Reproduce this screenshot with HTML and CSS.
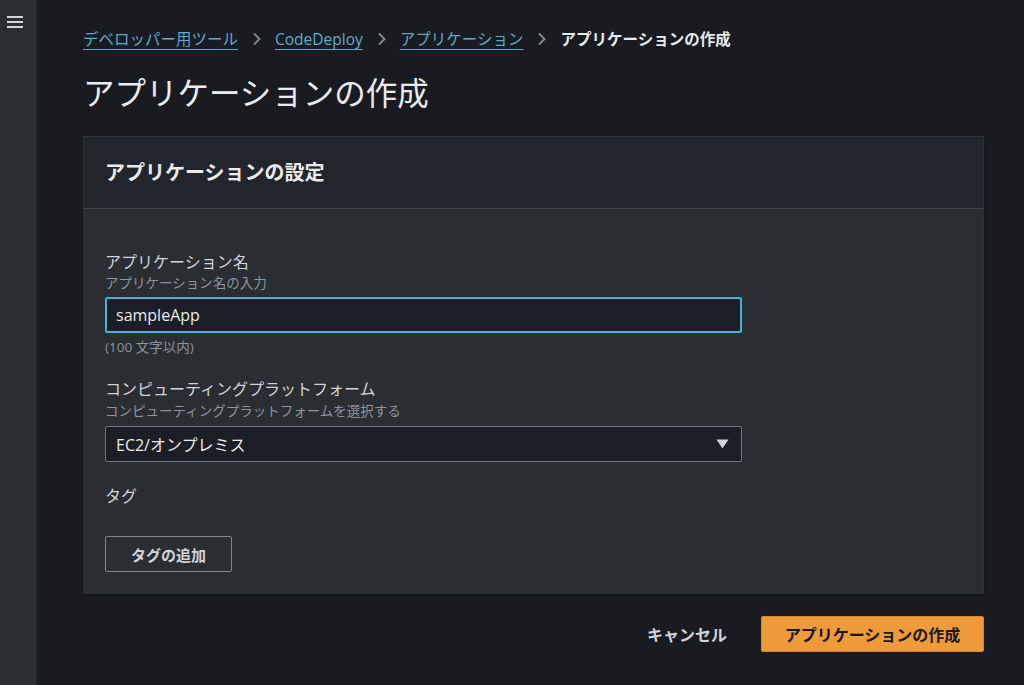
FILE: index.html
```html
<!DOCTYPE html>
<html lang="ja">
<head>
<meta charset="utf-8">
<title>アプリケーションの作成</title>
<link rel="stylesheet" href="styles.css">
</head>
<body>
<div class="app">
  <aside class="sidebar">
    <button class="menu-btn" aria-label="メニュー">
      <svg width="16" height="14" viewBox="0 0 16 14"><path d="M0 2h16M0 7h16M0 12h16" stroke="#d1d5db" stroke-width="2.2"/></svg>
    </button>
  </aside>
  <main class="main">
    <nav class="breadcrumb">
      <a class="crumb-link" href="#">デベロッパー用ツール</a>
      <span class="chev"><svg width="10" height="14" viewBox="0 0 10 14"><path d="M2 1.5l5.5 5.5L2 12.5" fill="none" stroke="#7d8590" stroke-width="2"/></svg></span>
      <a class="crumb-link" href="#">CodeDeploy</a>
      <span class="chev"><svg width="10" height="14" viewBox="0 0 10 14"><path d="M2 1.5l5.5 5.5L2 12.5" fill="none" stroke="#7d8590" stroke-width="2"/></svg></span>
      <a class="crumb-link" href="#">アプリケーション</a>
      <span class="chev"><svg width="10" height="14" viewBox="0 0 10 14"><path d="M2 1.5l5.5 5.5L2 12.5" fill="none" stroke="#7d8590" stroke-width="2"/></svg></span>
      <span class="crumb-current">アプリケーションの作成</span>
    </nav>
    <h1 class="page-title">アプリケーションの作成</h1>

    <section class="card">
      <header class="card-header">
        <h2 class="card-title">アプリケーションの設定</h2>
      </header>
      <div class="card-body">
        <div class="field">
          <label class="field-label">アプリケーション名</label>
          <div class="field-desc">アプリケーション名の入力</div>
          <div class="input focused">sampleApp</div>
          <div class="field-constraint">(100 文字以内)</div>
        </div>
        <div class="field">
          <label class="field-label">コンピューティングプラットフォーム</label>
          <div class="field-desc">コンピューティングプラットフォームを選択する</div>
          <div class="input select">
            <span>EC2/オンプレミス</span>
            <svg class="caret" width="13" height="10" viewBox="0 0 13 10"><path d="M0.5 0.5h12L6.5 9.5z" fill="#d1d5db"/></svg>
          </div>
        </div>
        <div class="field tags">
          <div class="field-label">タグ</div>
          <button class="btn-normal">タグの追加</button>
        </div>
      </div>
    </section>

    <div class="actions">
      <button class="btn-link">キャンセル</button>
      <button class="btn-primary">アプリケーションの作成</button>
    </div>
  </main>
</div>
</body>
</html>
```

FILE: styles.css
```css
* { box-sizing: border-box; }
html, body { margin: 0; padding: 0; }
body {
  background: #191b20;
  color: #d1d5db;
  font-family: "Open Sans", "Noto Sans CJK JP", sans-serif;
  width: 1024px;
  height: 685px;
  overflow: hidden;
}
.app { display: flex; height: 685px; }
.sidebar {
  width: 37px;
  flex: none;
  background: #2a2d32;
  border-right: 1px solid #202328;
  padding-top: 15px;
  display: flex;
  justify-content: center;
  align-items: flex-start;
}
.menu-btn {
  background: none;
  border: 0;
  padding: 0;
  margin-left: -7px;
  display: flex;
}
.main {
  flex: 1;
  padding: 28px 40px 0 46px;
}
.breadcrumb {
  display: flex;
  align-items: center;
  font-size: 15.5px;
  line-height: 22px;
  height: 22px;
}
.crumb-link {
  color: #5aaccf;
  text-decoration: underline;
  text-underline-offset: 4px;
  text-decoration-thickness: 1px;
}
.chev { display: flex; margin: 0 13px 0 14px; }
.crumb-current { color: #e9ebed; font-weight: 700; font-size: 15.5px; }
.page-title {
  margin: 22px 0 0;
  font-size: 31.5px;
  line-height: 42px;
  font-weight: 400;
  color: #e9ebed;
}
.card {
  margin-top: 22px;
  background: #2a2d32;
  border: 1px solid #2f3338;
  border-top-color: #30343a;
  box-shadow: 0 1px 2px rgba(0,0,0,0.4);
}
.card-header {
  background: #22252b;
  height: 72px;
  border-bottom: 1px solid #40454c;
  padding: 0 21px;
  display: flex;
  align-items: center;
}
.card-title {
  margin: 0;
  font-size: 20px;
  line-height: 26px;
  font-weight: 700;
  color: #e9ebed;
}
.card-body { padding: 42px 21px 21px; }
.field { margin-bottom: 22px; }
.field-label {
  display: block;
  font-size: 16px;
  line-height: 22px;
  color: #d1d5db;
}
.field-desc {
  font-size: 13.5px;
  line-height: 20px;
  color: #8d949e;
  margin-bottom: 4px;
}
.field + .field .field-desc { margin-bottom: 5px; margin-top: 1px; }
.input {
  width: 637px;
  height: 36px;
  background: #1b1e24;
  border: 1px solid #6f7680;
  border-radius: 2px;
  font-size: 16px;
  color: #e9ebed;
  padding: 0 10px;
  display: flex;
  align-items: center;
}
.input.focused { border: 2px solid #44b3d6; padding: 0 9px; }
.select { justify-content: space-between; padding-right: 12px; }
.field-constraint {
  font-size: 13.5px;
  line-height: 18px;
  margin-top: 5px;
  color: #8d949e;
}
.tags { margin-bottom: 0; margin-top: 23px; }
.tags .field-label { margin-bottom: 29px; }
.btn-normal {
  font-family: inherit;
  background: transparent;
  border: 1px solid #7d8590;
  border-radius: 2px;
  color: #d1d5db;
  font-weight: 700;
  font-size: 15px;
  height: 36px;
  padding: 0 25px;
}
.actions {
  display: flex;
  justify-content: flex-end;
  align-items: center;
  margin-top: 22px;
  gap: 14px;
}
.btn-link {
  font-family: inherit;
  background: none;
  border: 0;
  color: #d1d5db;
  font-size: 16px;
  font-weight: 700;
  padding: 0 20px;
  height: 36px;
}
.btn-primary {
  font-family: inherit;
  background: #ef9b39;
  border: 1px solid #d68830;
  border-radius: 2px;
  color: #16191f;
  font-size: 16px;
  font-weight: 700;
  height: 36px;
  width: 223px;
  padding: 0;
}
```
